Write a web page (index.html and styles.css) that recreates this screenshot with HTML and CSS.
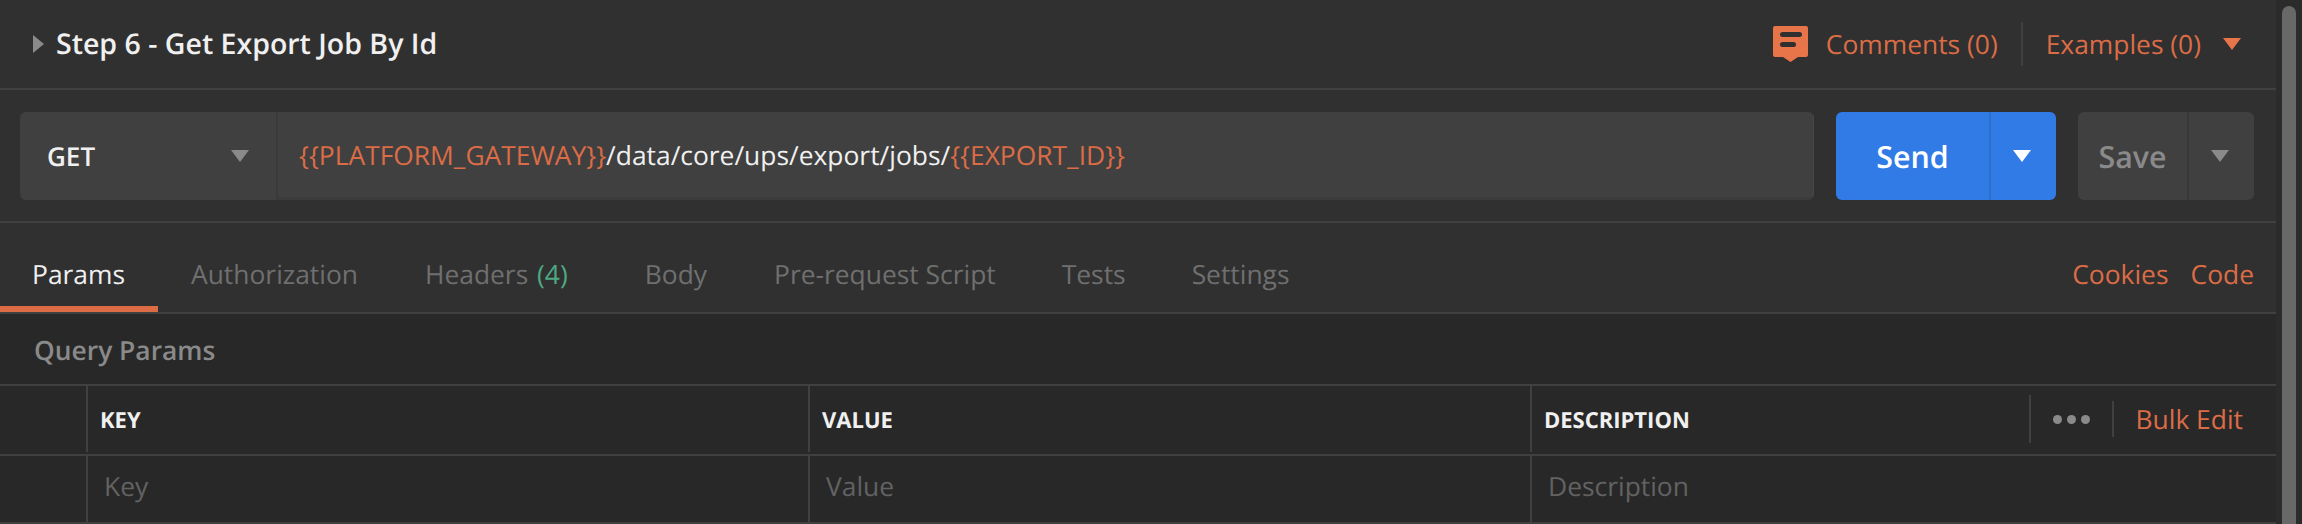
FILE: index.html
```html
<!DOCTYPE html>
<html>
<head>
    <title>Step 6 - Get Export Job By Id</title>
    <link rel="stylesheet" href="styles.css">
</head>
<body>
    <div class="app">
        <div class="main">
            <div class="title-row">
                <span class="caret-right"></span>
                <h1>Step 6 - Get Export Job By Id</h1>
                <div class="title-actions">
                    <svg class="comment-icon" width="35" height="36" viewBox="0 0 35 36">
                        <path fill="#e8744a" d="M2 0h31a2 2 0 0 1 2 2v27a2 2 0 0 1-2 2h-8l-7.500 5-7.500-5H2a2 2 0 0 1-2-2V2a2 2 0 0 1 2-2z"/>
                        <rect x="7" y="6" width="22" height="5" rx="2.500" fill="#303030"/>
                        <rect x="7" y="16" width="16" height="5" rx="2.500" fill="#303030"/>
                    </svg>
                    <a class="link comments">Comments (0)</a>
                    <span class="title-sep"></span>
                    <a class="link examples">Examples (0)</a>
                    <span class="caret-down orange"></span>
                </div>
            </div>

            <div class="request-row">
                <div class="url-group">
                    <div class="method">
                        <span>GET</span>
                        <span class="caret-down grey"></span>
                    </div>
                    <div class="url">
                        <span class="var">{{PLATFORM_GATEWAY}}</span>/data/core/ups/export/jobs/<span class="var">{{EXPORT_ID}}</span>
                    </div>
                </div>
                <div class="send-btn">
                    <span class="btn-label">Send</span>
                    <span class="btn-arrow"><span class="caret-down white"></span></span>
                </div>
                <div class="save-btn">
                    <span class="btn-label">Save</span>
                    <span class="btn-arrow"><span class="caret-down grey"></span></span>
                </div>
            </div>

            <div class="tabs-row">
                <div class="tab active">Params</div>
                <div class="tab">Authorization</div>
                <div class="tab">Headers <span class="count">(4)</span></div>
                <div class="tab tab-body">Body</div>
                <div class="tab">Pre-request Script</div>
                <div class="tab tab-tests">Tests</div>
                <div class="tab">Settings</div>
                <div class="tabs-right">
                    <a class="link">Cookies</a>
                    <a class="link">Code</a>
                </div>
            </div>

            <div class="params">
                <div class="query-title">Query Params</div>
                <div class="table-row head">
                    <div class="cell-check"></div>
                    <div class="cell"><b>KEY</b></div>
                    <div class="cell"><b>VALUE</b></div>
                    <div class="cell">
                        <b>DESCRIPTION</b>
                        <div class="head-actions">
                            <span class="head-sep tall"></span>
                            <span class="dots"><i></i><i></i><i></i></span>
                            <span class="head-sep"></span>
                            <a class="link bulk">Bulk Edit</a>
                        </div>
                    </div>
                </div>
                <div class="table-row body-row">
                    <div class="cell-check"></div>
                    <div class="cell"><span class="placeholder">Key</span></div>
                    <div class="cell"><span class="placeholder">Value</span></div>
                    <div class="cell"><span class="placeholder">Description</span></div>
                </div>
            </div>
        </div>
        <div class="scrollbar"><div class="thumb"></div></div>
    </div>
</body>
</html>
```

FILE: styles.css
```css
html, body {
    margin: 0;
    padding: 0;
    height: 100%;
    overflow: hidden;
    background-color: #282828;
}

body {
    font-family: 'Open Sans', 'Noto Sans', sans-serif;
    font-size: 26.4px;
    color: #f0f0f0;
    text-rendering: geometricPrecision;
}

.app {
    display: flex;
    height: 524px;
}

.main {
    flex: 1;
    min-width: 0;
}

.scrollbar {
    width: 26px;
    background-color: #2b2b2b;
    padding: 6px 6px 0;
    box-sizing: border-box;
}

.thumb {
    height: 100%;
    background-color: #686868;
    border-radius: 7px 7px 0 0;
}

.link {
    color: #dc6c46;
}

/* Title */
.title-row {
    display: flex;
    align-items: center;
    height: 88px;
    padding: 0 35px 0 33px;
    background-color: #303030;
    border-bottom: 2px solid #404040;
}

.caret-right {
    width: 0;
    height: 0;
    border-left: 11px solid #8a8a8a;
    border-top: 9px solid transparent;
    border-bottom: 9px solid transparent;
    margin-right: 12px;
}

h1 {
    margin: 0;
    font-size: 28.5px;
    font-weight: 600;
    color: #f0f0f0;
}

.title-actions {
    display: flex;
    align-items: center;
    margin-left: auto;
}

.comment-icon {
    margin-right: 18px;
}

.title-sep {
    width: 2px;
    height: 44px;
    background-color: #404040;
    margin: 0 23px;
}

.caret-down {
    display: inline-block;
    width: 0;
    height: 0;
    border-left: 9px solid transparent;
    border-right: 9px solid transparent;
    border-top: 12px solid #8a8a8a;
}

.caret-down.orange {
    border-top-color: #e8744a;
    margin-left: 22px;
}

.caret-down.white {
    border-top-color: #ffffff;
}

/* Request bar */
.request-row {
    display: flex;
    align-items: flex-start;
    height: 133px;
    padding: 22px 22px 0 20px;
    box-sizing: border-box;
    background-color: #303030;
    border-bottom: 2px solid #404040;
}

.url-group {
    display: flex;
    flex: 1;
    height: 88px;
    background-color: #404040;
    border-radius: 6px;
    overflow: hidden;
}

.method {
    display: flex;
    align-items: center;
    justify-content: space-between;
    width: 258px;
    padding: 0 27px 0 27px;
    box-sizing: border-box;
    border-right: 2px solid #3a3a3a;
    font-size: 26px;
    font-weight: 600;
    color: #f0f0f0;
}

.url {
    display: flex;
    align-items: center;
    padding-left: 21px;
    white-space: pre;
    color: #f0f0f0;
    border-bottom: 3px solid #3c3c3c;
    border-right: 1px solid #474747;
    flex: 1;
}

.var {
    color: #dc6c46;
}

.send-btn, .save-btn {
    display: flex;
    height: 88px;
    border-radius: 6px;
    overflow: hidden;
    font-size: 30.4px;
    font-weight: 600;
}

.send-btn {
    width: 220px;
    margin-left: 22px;
    background-color: #317be6;
    color: #ffffff;
}

.save-btn {
    width: 176px;
    margin-left: 22px;
    background-color: #404040;
    color: #8a8a8a;
}

.btn-label {
    flex: 1;
    display: flex;
    align-items: center;
    justify-content: center;
}

.btn-arrow {
    width: 67px;
    padding-right: 3px;
    display: flex;
    align-items: center;
    justify-content: center;
    box-sizing: border-box;
}

.send-btn .btn-arrow {
    border-left: 2px solid #2c6fcf;
}

.save-btn .btn-arrow {
    border-left: 2px solid #383838;
}

/* Tabs */
.tabs-row {
    display: flex;
    align-items: stretch;
    height: 89px;
    padding-right: 22px;
    background-color: #303030;
    border-bottom: 2px solid #404040;
    color: #6f6f6f;
}

.tab {
    display: flex;
    align-items: center;
    padding: 19px 34px 0 33px;
    white-space: pre;
    border-bottom: 6px solid transparent;
}

.tab.active {
    padding-left: 32px;
    padding-right: 33px;
    color: #f0f0f0;
    border-bottom-color: #dc6c46;
}

.tab-body {
    padding-left: 43px;
}

.tab-tests {
    padding-left: 32px;
    padding-right: 33px;
}

.count {
    margin-left: 2px;
    color: #4fa884;
}

.tabs-right {
    display: flex;
    align-items: center;
    gap: 22px;
    margin-left: auto;
    padding: 19px 0 6px;
}

/* Params table */
.query-title {
    height: 70px;
    line-height: 72px;
    padding-left: 34px;
    font-weight: 600;
    color: #8a8a8a;
    border-bottom: 2px solid #404040;
}

.table-row {
    display: grid;
    grid-template-columns: 86px 722px 722px 1fr;
    height: 68px;
    border-bottom: 2px solid #404040;
}

.cell {
    display: flex;
    align-items: center;
    padding-left: 12px;
    border-left: 2px solid #404040;
    min-width: 0;
}

.head .cell {
    margin-bottom: 2px;
}

.cell b {
    padding-top: 2px;
    font-size: 22px;
    font-weight: 700;
    color: #f0f0f0;
}

.head-actions {
    display: flex;
    align-items: center;
    margin-left: auto;
    padding-right: 33px;
}

.head-sep {
    width: 2px;
    height: 36px;
    background-color: #404040;
}

.head-sep.tall {
    height: 48px;
}

.dots {
    display: flex;
    gap: 5px;
    margin: 0 22px;
}

.dots i {
    width: 9px;
    height: 9px;
    border-radius: 50%;
    background-color: #8a8a8a;
}

.bulk {
    margin-left: 22px;
}

.body-row {
    height: 66px;
}

.body-row .cell {
    padding-left: 16px;
    padding-bottom: 6px;
}

.placeholder {
    color: #626262;
}
```
